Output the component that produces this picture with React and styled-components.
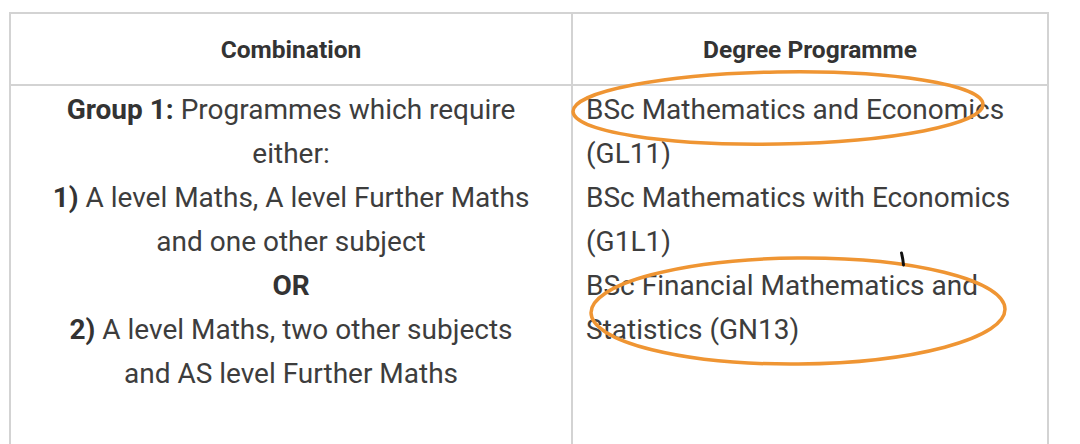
import React from 'react'
import styled, { createGlobalStyle } from 'styled-components'

const GlobalStyle = createGlobalStyle`
  html, body {
    margin: 0;
    padding: 0;
    background: #ffffff;
  }
  body {
    font-family: Roboto, "Liberation Sans", Arial, sans-serif;
    color: #3d3d3d;
  }
`

const Page = styled.div`
  position: relative;
  width: 1080px;
  height: 444px;
  overflow: hidden;
  background: #fff;
`

const Table = styled.table`
  margin: 12px 0 0 9px;
  border-collapse: separate;
  border-spacing: 0;
  table-layout: fixed;
  border-top: 2px solid #d3d3d3;
  border-left: 2px solid #d3d3d3;
  color: #3d3d3d;
`

const HeadCell = styled.th`
  width: ${p => p.w}px;
  height: 70px;
  padding: 0;
  border-right: 2px solid #d3d3d3;
  border-bottom: 2px solid #d3d3d3;
  font-size: 24.5px;
  font-weight: 700;
  color: #333;
  text-align: center;
  vertical-align: middle;
`

const Cell = styled.td`
  padding: ${p => (p.center ? '2px 38px 80px' : '2px 14px 80px 13px')};
  border-right: 2px solid #d3d3d3;
  font-size: 28px;
  line-height: 44px;
  text-align: ${p => (p.center ? 'center' : 'left')};
  vertical-align: top;
`

const Strong = styled.b`
  font-weight: 700;
  color: #333;
`

const Marks = styled.svg`
  position: absolute;
  top: 0;
  left: 0;
  pointer-events: none;
`

const groups = [
  'BSc Mathematics and Economics (GL11)',
  'BSc Mathematics with Economics (G1L1)',
  'BSc Financial Mathematics and Statistics (GN13)',
]

export default function App () {
  return (
    <Page>
      <GlobalStyle />
      <Table>
        <thead>
          <tr>
            <HeadCell w={560}>Combination</HeadCell>
            <HeadCell w={474}>Degree Programme</HeadCell>
          </tr>
        </thead>
        <tbody>
          <tr>
            <Cell center>
              <Strong>Group 1:</Strong> Programmes which require either:
              <br />
              <Strong>1)</Strong> A level Maths, A level Further Maths and one other subject
              <br />
              <Strong>OR</Strong>
              <br />
              <Strong>2)</Strong> A level Maths, two other subjects and AS level Further Maths
            </Cell>
            <Cell>
              {groups.map(g => <div key={g}>{g}</div>)}
            </Cell>
          </tr>
        </tbody>
      </Table>
      <Marks width="1080" height="444" viewBox="0 0 1080 444">
        <ellipse cx="778" cy="108" rx="205" ry="36" transform="rotate(-1 778 108)"
          fill="none" stroke="#ef9533" strokeWidth="3.5" />
        <ellipse cx="798" cy="311" rx="207" ry="53" transform="rotate(-0.5 798 311)"
          fill="none" stroke="#ef9533" strokeWidth="3.5" />
        <path d="M901.5 253 Q903 259 903.5 265" fill="none" stroke="#111" strokeWidth="3" strokeLinecap="round" />
      </Marks>
    </Page>
  )
}
